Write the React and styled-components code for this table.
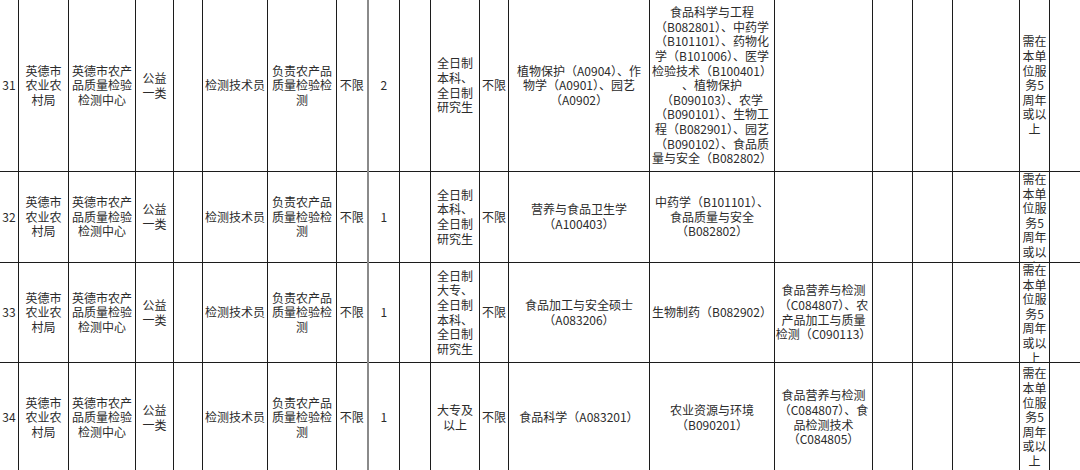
import React from "react";
import styled, { createGlobalStyle } from "styled-components";

const Global = createGlobalStyle`
  html, body { margin: 0; padding: 0; background: #fff; overflow: hidden; }
`;

const Sheet = styled.div`
  width: 1080px;
  height: 470px;
  overflow: hidden;
  background: #fff;
`;

const Table = styled.table`
  border-collapse: collapse;
  table-layout: fixed;
  width: 1082px;
  margin: -1px 0 0 -1px;
  font-family: "Noto Sans CJK SC", "Liberation Sans", sans-serif;
  font-size: 12px;
  color: #2b2b2b;
`;

const Row = styled.tr`
  height: ${(p) => p.$h}px;
`;

const Cell = styled.td`
  border: 1px solid #1c1c1c;
  border-left: ${(p) => (p.$grey ? "2px solid #8a8a8a" : "1px solid #1c1c1c")};
  padding: 0;
  text-align: center;
  vertical-align: middle;
  white-space: nowrap;
  overflow: hidden;
  line-height: 14.6px;
`;

const Line = styled.span`
  display: block;
`;

const Clip = styled.div`
  max-height: ${(p) => p.$max}px;
  overflow: hidden;
`;

const widths = [19, 50, 67, 38, 29, 65, 69, 31, 32, 31, 49, 29, 141, 125, 98, 40, 40, 67, 30, 32];

const note = ["需在", "本单", "位服", "务5", "周年", "或以", "上"];
const org = ["英德市", "农业农", "村局"];
const unit = ["英德市农产", "品质量检验", "检测中心"];
const kind = ["公益", "一类"];
const post = ["检测技术员"];
const duty = ["负责农产品", "质量检验检", "测"];

const rows = [
  {
    h: 172,
    clip: null,
    no: "31",
    count: "2",
    edu: ["全日制", "本科、", "全日制", "研究生"],
    a: ["植物保护（A0904）、作", "物学（A0901）、园艺", "（A0902）"],
    b: [
      "食品科学与工程",
      "（B082801）、中药学",
      "（B101101）、药物化",
      "学（B101006）、医学",
      "检验技术（B100401）",
      "、植物保护",
      "（B090103）、农学",
      "（B090101）、生物工",
      "程（B082901）、园艺",
      "（B090102）、食品质",
      "量与安全（B082802）",
    ],
    c: [],
  },
  {
    h: 91,
    clip: 90,
    no: "32",
    count: "1",
    edu: ["全日制", "本科、", "全日制", "研究生"],
    a: ["营养与食品卫生学", "（A100403）"],
    b: ["中药学（B101101）、", "食品质量与安全", "（B082802）"],
    c: [],
  },
  {
    h: 100,
    clip: 99,
    no: "33",
    count: "1",
    edu: ["全日制", "大专、", "全日制", "本科、", "全日制", "研究生"],
    a: ["食品加工与安全硕士", "（A083206）"],
    b: ["生物制药（B082902）"],
    c: ["食品营养与检测", "（C084807）、农", "产品加工与质量", "检测（C090113）"],
  },
  {
    h: 110,
    clip: null,
    no: "34",
    count: "1",
    edu: ["大专及", "以上"],
    a: ["食品科学（A083201）"],
    b: ["农业资源与环境", "（B090201）"],
    c: ["食品营养与检测", "（C084807）、食", "品检测技术", "（C084805）"],
  },
];

const Lines = ({ items }) => items.map((t, i) => <Line key={i}>{t}</Line>);

export default function App() {
  return (
    <Sheet>
      <Global />
      <Table>
        <colgroup>
          {widths.map((w, i) => (
            <col key={i} style={{ width: w }} />
          ))}
        </colgroup>
        <tbody>
          {rows.map((r) => (
            <Row key={r.no} $h={r.h}>
              <Cell>{r.no}</Cell>
              <Cell><Lines items={org} /></Cell>
              <Cell><Lines items={unit} /></Cell>
              <Cell><Lines items={kind} /></Cell>
              <Cell />
              <Cell><Lines items={post} /></Cell>
              <Cell><Lines items={duty} /></Cell>
              <Cell>不限</Cell>
              <Cell $grey>{r.count}</Cell>
              <Cell />
              <Cell><Lines items={r.edu} /></Cell>
              <Cell>不限</Cell>
              <Cell><Lines items={r.a} /></Cell>
              <Cell><Lines items={r.b} /></Cell>
              <Cell><Lines items={r.c} /></Cell>
              <Cell />
              <Cell />
              <Cell />
              <Cell>
                {r.clip ? (
                  <Clip $max={r.clip}><Lines items={note} /></Clip>
                ) : (
                  <Lines items={note} />
                )}
              </Cell>
              <Cell />
            </Row>
          ))}
        </tbody>
      </Table>
    </Sheet>
  );
}
